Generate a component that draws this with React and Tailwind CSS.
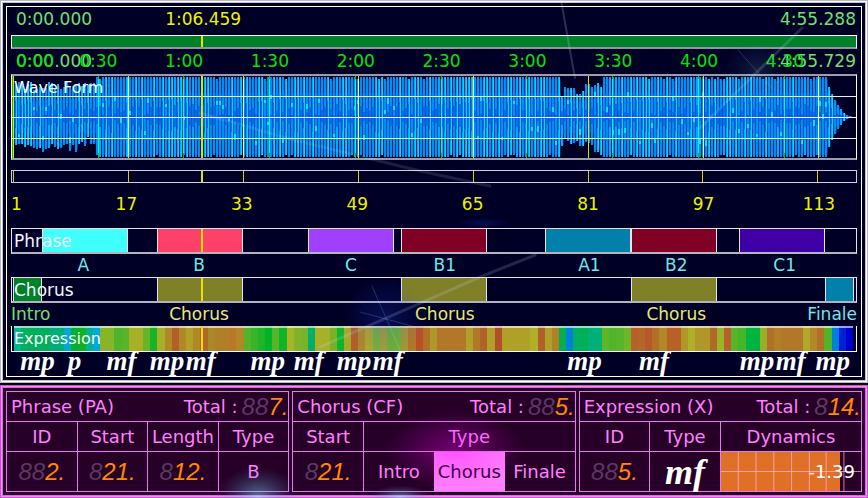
import React, { useState } from 'react';
import clsx from 'clsx';

const MEASURES = 117;
const DURATION = 295.7;
const POSITION = 66.459;

const TIME_LABELS = ['0:00', '0:30', '1:00', '1:30', '2:00', '2:30', '3:00', '3:30', '4:00', '4:30'];

const PHRASES = [
  { start: 4, end: 16, label: 'A', color: 'bg-[#40ffff]' },
  { start: 20, end: 32, label: 'B', color: 'bg-[#ff4068]' },
  { start: 41, end: 53, label: 'C', color: 'bg-[#a040ff]' },
  { start: 54, end: 66, label: 'B1', color: 'bg-[#800026]' },
  { start: 74, end: 86, label: 'A1', color: 'bg-[#0080aa]' },
  { start: 86, end: 98, label: 'B2', color: 'bg-[#800026]' },
  { start: 101, end: 113, label: 'C1', color: 'bg-[#4000a8]' },
];

const CHORUSES = [
  { start: 0, end: 4, label: 'Intro', color: 'bg-[#008028]', text: 'text-[#70e070]', align: 'justify-start' },
  { start: 20, end: 32, label: 'Chorus', color: 'bg-[#808028]', text: 'text-[#e8e870]' },
  { start: 54, end: 66, label: 'Chorus', color: 'bg-[#808028]', text: 'text-[#e8e870]' },
  { start: 86, end: 98, label: 'Chorus', color: 'bg-[#808028]', text: 'text-[#e8e870]' },
  { start: 113, end: 117, label: 'Finale', color: 'bg-[#0080aa]', text: 'text-[#70e8e8]', align: 'justify-end' },
];

// one colour per measure
const EXPRESSION = `
00b890 00b060 00b058 00b060 00b058 00ad78 00ad78 00a8d8 00b030 10b020
00b090 00a8e0 88b428 88b428 50b428 58b428 a8b028 a8b028 68b428 18b428
a8b028 b08828 b06028 b08828 b0a028 b08828 b06828 a88828 b08028 b08028
b87828 b08828 50b428 38b428 20b428 00b428 58b428 10b428 a8b428 80b428
78b428 00b068 a8b028 a8b028 78b028 10b428 a8a828 b06028 b08828 b0a828
78b438 a8a030 70b430 70b430 a89830 b07828 b85028 b07028 b09828 b07828
b07828 b07828 b07828 b0a028 b07828 b06028 b0a028 b05028 b0a028 b0a028
b0a028 b0a028 b0b028 b06028 b0a028 b08028 00b050 0080d8 00b060 00b058
00b078 00b078 60b428 50b428 58b428 70b428 b86028 b06828 b85828 b07028
b08828 b86028 b86028 b09828 b0b028 b09828 b09828 b06828 98b428 b86028
58b428 48b428 00b440 00b440 98b028 b07028 b08028 b07828 b07828 b07828
b0a828 b08828 b07028 50b428 0080d8 0020d8 0000d0`.trim().split(/\s+/);

const DYNAMICS = [
  [1, 'mp'], [7.6, 'p'], [13, 'mf'], [19, 'mp'], [24, 'mf'], [33, 'mp'], [39, 'mf'],
  [45, 'mp'], [50, 'mf'], [77, 'mp'], [87, 'mf'], [101, 'mp'], [106, 'mf'], [111.5, 'mp'],
];

// Repeatable noise so the wave form looks the same on each render
const noise = (n) => {
  const v = Math.sin(n * 127.1 + 311.7) * 43758.5453;
  return v - Math.floor(v);
};

const envelope = (x, seed) => {
  const r = noise(x + seed);
  if (x < 84) return 26 + r * 9 - (x > 68 && seed ? 6 : 0);
  if (x > 546 && x < 560) return 16 + r * 14;
  if (x >= 560 && x < 590) return 20 + r * 10 + (x - 560) / 3;
  if (x > 813) return Math.max(1, 38 * Math.pow((840 - x) / 27, 2));
  return r > 0.92 ? 34 + r * 4 : 40;
};

const BARS = Array.from({ length: 280 }, (_, i) => {
  const x = i * 3;
  return { x, up: envelope(x, 0), down: envelope(x, 500), tone: noise(i * 3.7) };
});

const marker = (value, total) => ({ left: `${(value / total) * 100}%` });

function Playhead() {
  return <span className="absolute inset-y-0 w-0.5 -translate-x-1/2 bg-[#e8e000]" style={marker(POSITION, DURATION)} />;
}

function WaveForm() {
  return (
    <svg className="absolute inset-0 h-full w-full" viewBox="0 0 844 82" preserveAspectRatio="none" shapeRendering="crispEdges">
      {BARS.map(({ x, up, down, tone }) => (
        <g key={x}>
          <rect x={x} y={41 - up * 0.95} width="3" height={(up + down) * 0.95} fill={tone > 0.5 ? '#002068' : '#003088'} />
          <rect x={x} y={41 - up * 0.6} width="3" height={(up + down) * 0.6} fill={tone > 0.4 ? '#0040b0' : '#0050d0'} />
          <rect x={x} y={41 - up} width="2" height={up + down} fill={tone > 0.6 ? '#00a8ff' : '#0090f0'} />
          <rect x={x} y={41 - up * 0.5 * tone} width="3" height={(up + down) * 0.45 * tone} fill="#0060e0" opacity="0.7" />
          {tone > 0.65 && <rect x={x + 1} y={41 - up} width="1" height={up + down} fill="#00d8ff" />}
          {tone < 0.3 && (
            <rect x={x} y={16 + noise(x + 9) * 50} width="2" height={3 + tone * 9} fill="#00e8ff" opacity={up > 20 ? 1 : 0} />
          )}
        </g>
      ))}
      {TIME_LABELS.map((t, i) => (
        <g key={t}>
          <rect x={(i * 30 / DURATION) * 845} y="0" width="1" height="82" fill="#00c800" />
          {i > 0 && <rect x={(i * 30 / DURATION) * 845} y="3" width="1" height="74" fill="#00ffc8" />}
        </g>
      ))}
      {[0, 1, 2, 3, 4, 5, 6, 7].map(i => (
        <g key={i}>
          <rect x={1 + i * 115} y="0" width="1" height="82" fill="#e8e000" />
          {i > 0 && i !== 5 && <rect x={1 + i * 115} y="3" width="1" height="76" fill="#f4f8b0" />}
        </g>
      ))}
      <rect y="20" width="844" height="1" fill="#e8f0ff" />
      <rect y="41" width="844" height="1" fill="#ffffff" />
      <rect y="62" width="844" height="1" fill="#e8f0ff" />
    </svg>
  );
}

// Fills the space between segments so that they can sit in a flex row
function withGaps(segments) {
  const out = [];
  let at = 0;
  segments.forEach(s => {
    if (s.start > at) out.push({ span: s.start - at });
    out.push({ ...s, span: s.end - s.start });
    at = s.end;
  });
  if (at < MEASURES) out.push({ span: MEASURES - at });
  return out;
}

function Track({ name, segments }) {
  return (
    <div className="relative flex h-[26px] items-center border border-b-2 border-[#e4e4ec] border-b-[#b4b4c0] pl-px pr-0.5">
      {withGaps(segments).map((s, i) => (
        <div
          key={i}
          className={clsx('h-full min-w-0 basis-0', s.color, s.color && 'shadow-[inset_1px_0_0_#e4e4ec,inset_-1px_0_0_#e4e4ec]')}
          style={{ flexGrow: s.span }}
        />
      ))}
      <Playhead />
      <span className="absolute left-0.5 text-[17px] leading-5 text-[#f4f4ff]">{name}</span>
    </div>
  );
}

function TrackLabels({ segments }) {
  return (
    <div className="flex text-[17px] leading-[23px]">
      {withGaps(segments).map((s, i) => (
        <div
          key={i}
          className={clsx('flex min-w-0 basis-0 whitespace-nowrap', s.align || 'justify-center', s.text || 'text-[#70e8e8]')}
          style={{ flexGrow: s.span }}
        >
          {s.label}
        </div>
      ))}
    </div>
  );
}

function Timeline() {
  return (
    <section className="relative border border-[#b8b8c0] bg-[#000026] p-[5px] shadow-[inset_0_0_0_1px_#ffffff,inset_0_0_0_2px_#c4c4d0]">
      <div className="border border-white px-1">
        <div className="relative flex justify-between px-[5px] pr-px pb-1 text-[17px] leading-6 text-[#70e070]">
          <span>0:00.000</span>
          <span className="absolute -translate-x-1/2 text-[#f0f000]" style={marker(POSITION + 0.7, DURATION)}>1:06.459</span>
          <span>4:55.288</span>
        </div>
        <div className="relative h-3.5 border border-b-2 border-white border-b-[#9494a0] bg-[#008028]">
          <Playhead />
        </div>
        <div className="relative flex justify-between px-[5px] pr-px text-[17px] leading-[25px] text-[#70e070]">
          <span>0:00.000</span>
          <span>4:55.729</span>
          <span className="absolute left-[5px] text-[#00e800]">{TIME_LABELS[0]}</span>
          {TIME_LABELS.slice(1).map((t, i) => (
            <span key={t} className="absolute -translate-x-1/2 text-[#00e800]" style={marker((i + 1) * 30 + 0.5, DURATION)}>
              {t}
            </span>
          ))}
        </div>
        <div className="relative h-[86px] border-x border-y-2 border-white border-y-[#9c9cac]">
          <WaveForm />
          <Playhead />
          <span className="absolute left-0.5 top-0.5 text-base leading-5 text-white">Wave Form</span>
        </div>

        <div className="relative mt-2.5 h-[13px] border border-[#d0d0dc]">
          {[0, 1, 2, 3, 4, 5, 6, 7].map(i => (
            <span key={i} className="absolute inset-y-0 w-px bg-[#d8d000]" style={marker(0.2 + i * 16, 117.6)} />
          ))}
          <Playhead />
        </div>
        <div className="flex pr-0.5 pb-0.5 text-[17px] leading-[43px] text-[#f0f000]">
          <span className="min-w-0 basis-0" style={{ flexGrow: 8 }}>1</span>
          {[17, 33, 49, 65, 81, 97].map(n => (
            <span key={n} className="min-w-0 basis-0 text-center" style={{ flexGrow: 16 }}>{n}</span>
          ))}
          <span className="min-w-0 basis-0" style={{ flexGrow: 3 }} />
          <span className="min-w-0 basis-0 text-center" style={{ flexGrow: 10 }}>113</span>
        </div>

        <Track name="Phrase" segments={PHRASES} />
        <TrackLabels segments={PHRASES} />
        <Track name="Chorus" segments={CHORUSES} />
        <TrackLabels segments={CHORUSES} />

        <div className="relative flex h-[26px] items-center border border-t-0 border-white px-0.5">
          {EXPRESSION.map((hex, i) => (
            <div key={i} className="h-full min-w-0 flex-1 border-t-2 border-white/60" style={{ backgroundColor: `#${hex}` }} />
          ))}
          <Playhead />
          <span className="absolute left-0.5 text-base leading-5 text-white">Expression</span>
        </div>
        <div className="flex px-0.5 pb-1.5 font-['Liberation_Serif',serif] text-[27px] leading-[18px] font-bold italic text-white">
          <span className="min-w-0 basis-0" style={{ flexGrow: DYNAMICS[0][0] }} />
          {DYNAMICS.map(([start, label], i) => {
            const next = DYNAMICS[i + 1] ? DYNAMICS[i + 1][0] : MEASURES;
            return (
              <span key={start} className="min-w-0 basis-0" style={{ flexGrow: next - start }}>{label}</span>
            );
          })}
        </div>
      </div>
    </section>
  );
}

// Three digit counter: unused places stay dim
function Digits({ value }) {
  return (
    <span className="inline-flex align-middle font-['Liberation_Sans',sans-serif] text-2xl leading-7 italic">
      <span aria-hidden="true" className="text-[#5c3862]">{'8'.repeat(3 - value.length)}</span>
      <span className="text-[#ff8800]">{value}.</span>
    </span>
  );
}

function Cell({ as: Tag = 'td', className, children, ...rest }) {
  return (
    <Tag className={clsx('border border-[#e878f0] p-0 text-center font-normal', className)} {...rest}>
      {children}
    </Tag>
  );
}

function StatTable({ title, total, cols, heads, children }) {
  return (
    <table className="w-full table-fixed border-collapse">
      <colgroup>
        {cols.map((c, i) => <col key={i} className={c} />)}
      </colgroup>
      <thead>
        <tr className="h-[30px]">
          <Cell as="th" colSpan={cols.length}>
            <div className="flex items-center justify-between pl-1">
              <span>{title}</span>
              <span className="flex items-center gap-1">Total : <Digits value={total} /></span>
            </div>
          </Cell>
        </tr>
        <tr className="h-[30px]">
          {heads.map(([label, span]) => (
            <Cell as="th" key={label} colSpan={span}>{label}</Cell>
          ))}
        </tr>
      </thead>
      <tbody>
        <tr className="h-10">{children}</tr>
      </tbody>
    </table>
  );
}

function Inspector() {
  const [type, setType] = useState('Chorus');

  return (
    <section className="relative mt-0.5 border border-[#c058c8] bg-[#260026] p-[5px] text-lg leading-6 text-[#ff80ff] shadow-[inset_0_0_0_1px_#ff88ff,inset_0_0_0_2px_#d868e0]">
      <div className="grid grid-cols-3 gap-[3px]">
        <StatTable
          title="Phrase (PA)"
          total="7"
          cols={['w-1/4', 'w-1/4', 'w-1/4', 'w-1/4']}
          heads={[['ID', 1], ['Start', 1], ['Length', 1], ['Type', 1]]}
        >
          <Cell><Digits value="2" /></Cell>
          <Cell><Digits value="21" /></Cell>
          <Cell><Digits value="12" /></Cell>
          <Cell>B</Cell>
        </StatTable>

        <StatTable
          title="Chorus (CF)"
          total="5"
          cols={['w-1/4', 'w-1/4', 'w-1/4', 'w-1/4']}
          heads={[['Start', 1], ['Type', 3]]}
        >
          <Cell><Digits value="21" /></Cell>
          {['Intro', 'Chorus', 'Finale'].map((t, i) => (
            <Cell key={t} className={clsx(i > 0 && 'border-l-0', i < 2 && 'border-r-0')}>
              <button
                type="button"
                aria-pressed={type === t}
                onClick={() => setType(t)}
                className={clsx('block h-[39px] w-full', type === t && 'bg-[#ff80ff] text-[#260026]')}
              >
                {t}
              </button>
            </Cell>
          ))}
        </StatTable>

        <StatTable
          title="Expression (X)"
          total="14"
          cols={['w-1/4', 'w-1/4', 'w-1/2']}
          heads={[['ID', 1], ['Type', 1], ['Dynamics', 1]]}
        >
          <Cell><Digits value="5" /></Cell>
          <Cell className="font-['Liberation_Serif',serif] text-4xl leading-8">
            <span className="font-bold italic text-white">mf</span>
          </Cell>
          <Cell>
            <div className="relative flex h-[39px] items-center justify-end pr-1.5">
              <div className="absolute inset-y-0 left-0 w-[85%] bg-[#e07028]" />
              <svg className="absolute inset-0 h-full w-full" viewBox="0 0 142 39" preserveAspectRatio="none" shapeRendering="crispEdges">
                <path d="M0 19.5H142M17.5 0V39M35.5 0V39M53.5 0V39M71.5 0V39M89.5 0V39M106.5 0V39M124.5 0V39" stroke="#ffb8d8" strokeOpacity="0.7" />
              </svg>
              <span className="relative text-white">-1.39</span>
            </div>
          </Cell>
        </StatTable>
      </div>
    </section>
  );
}

// Light streaks and glows laid over both panels
function Flares() {
  return (
    <svg className="pointer-events-none absolute inset-0 h-full w-full" viewBox="0 0 868 498" preserveAspectRatio="none" fill="none">
      <defs>
        <radialGradient id="teal"><stop offset="0" stopColor="#90e8ff" stopOpacity="0.5" /><stop offset="1" stopColor="#4080c0" stopOpacity="0" /></radialGradient>
        <radialGradient id="pink"><stop offset="0" stopColor="#ff00ff" stopOpacity="0.35" /><stop offset="1" stopColor="#ff00ff" stopOpacity="0" /></radialGradient>
        <radialGradient id="blue"><stop offset="0" stopColor="#2040ff" stopOpacity="0.22" /><stop offset="1" stopColor="#2040ff" stopOpacity="0" /></radialGradient>
      </defs>
      <ellipse cx="258" cy="497" rx="42" ry="30" fill="url(#teal)" />
      <ellipse cx="400" cy="497" rx="32" ry="12" fill="url(#teal)" />
      <ellipse cx="455" cy="450" rx="70" ry="40" fill="url(#pink)" />
      <circle cx="385" cy="318" r="42" fill="url(#blue)" />
      <circle cx="757" cy="70" r="34" fill="url(#teal)" opacity="0.25" />
      <ellipse cx="484" cy="223" rx="26" ry="5" fill="url(#blue)" />
      <g stroke="#c8e8ff" strokeLinecap="round">
        <path d="M320 347L485 275L535 255" strokeWidth="3" strokeOpacity="0.17" />
        <path d="M200 113L290 139L420 171L490 186" strokeWidth="3" strokeOpacity="0.13" />
        <path d="M561 0L569 45L575 78" strokeWidth="2" strokeOpacity="0.2" />
        <path d="M700 128L757 72L802 28" strokeWidth="3" strokeOpacity="0.17" />
        <path d="M738 50L772 88M372 286L400 350M360 312L412 326" strokeWidth="1" strokeOpacity="0.18" />
      </g>
    </svg>
  );
}

export default function App() {
  return (
    <main className="relative bg-black font-['DejaVu_Sans',sans-serif]">
      <Timeline />
      <Inspector />
      <Flares />
    </main>
  );
}
